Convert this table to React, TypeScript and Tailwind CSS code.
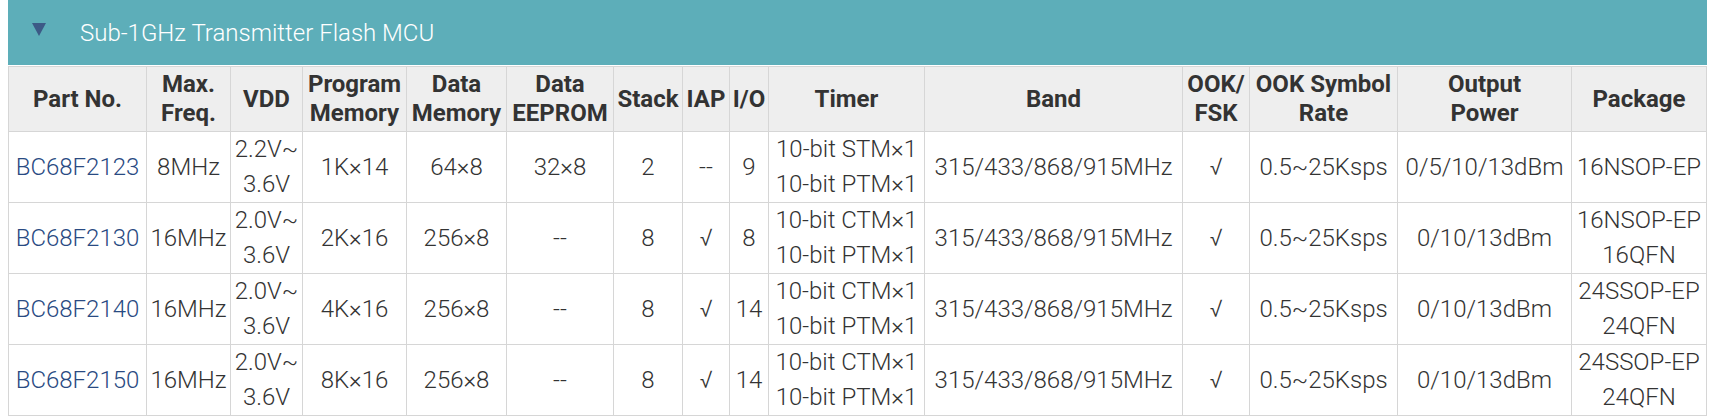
import React from "react"

type Row = {
  part: string
  freq: string
  vdd: [string, string]
  prog: string
  data: string
  eeprom: string
  stack: string
  iap: string
  io: string
  timer: [string, string]
  band: string
  ook: string
  rate: string
  power: string
  pkg: string[]
}

const rows: Row[] = [
  {
    part: "BC68F2123",
    freq: "8MHz",
    vdd: ["2.2V~", "3.6V"],
    prog: "1K×14",
    data: "64×8",
    eeprom: "32×8",
    stack: "2",
    iap: "--",
    io: "9",
    timer: ["10-bit STM×1", "10-bit PTM×1"],
    band: "315/433/868/915MHz",
    ook: "√",
    rate: "0.5~25Ksps",
    power: "0/5/10/13dBm",
    pkg: ["16NSOP-EP"],
  },
  {
    part: "BC68F2130",
    freq: "16MHz",
    vdd: ["2.0V~", "3.6V"],
    prog: "2K×16",
    data: "256×8",
    eeprom: "--",
    stack: "8",
    iap: "√",
    io: "8",
    timer: ["10-bit CTM×1", "10-bit PTM×1"],
    band: "315/433/868/915MHz",
    ook: "√",
    rate: "0.5~25Ksps",
    power: "0/10/13dBm",
    pkg: ["16NSOP-EP", "16QFN"],
  },
  {
    part: "BC68F2140",
    freq: "16MHz",
    vdd: ["2.0V~", "3.6V"],
    prog: "4K×16",
    data: "256×8",
    eeprom: "--",
    stack: "8",
    iap: "√",
    io: "14",
    timer: ["10-bit CTM×1", "10-bit PTM×1"],
    band: "315/433/868/915MHz",
    ook: "√",
    rate: "0.5~25Ksps",
    power: "0/10/13dBm",
    pkg: ["24SSOP-EP", "24QFN"],
  },
  {
    part: "BC68F2150",
    freq: "16MHz",
    vdd: ["2.0V~", "3.6V"],
    prog: "8K×16",
    data: "256×8",
    eeprom: "--",
    stack: "8",
    iap: "√",
    io: "14",
    timer: ["10-bit CTM×1", "10-bit PTM×1"],
    band: "315/433/868/915MHz",
    ook: "√",
    rate: "0.5~25Ksps",
    power: "0/10/13dBm",
    pkg: ["24SSOP-EP", "24QFN"],
  },
]

const widths = [138, 84, 72, 104, 100, 107, 69, 47, 39, 156, 258, 67, 148, 174, 135]

const heads: string[][] = [
  ["Part No."],
  ["Max.", "Freq."],
  ["VDD"],
  ["Program", "Memory"],
  ["Data", "Memory"],
  ["Data", "EEPROM"],
  ["Stack"],
  ["IAP"],
  ["I/O"],
  ["Timer"],
  ["Band"],
  ["OOK/", "FSK"],
  ["OOK Symbol", "Rate"],
  ["Output", "Power"],
  ["Package"],
]

const Lines = ({ items }: { items: string[] }) => (
  <>
    {items.map((t, i) => (
      <React.Fragment key={i}>
        {i > 0 && <br />}
        {t}
      </React.Fragment>
    ))}
  </>
)

export default function App() {
  const td = "border border-[#d6d6d6] px-[2px] py-0 text-center align-middle whitespace-nowrap"

  return (
    <div className="w-[1718px] h-[417px] bg-white overflow-hidden font-['Roboto',sans-serif]">
      <div className="ml-[8px] w-[1699px]">
        {/* collapsible header */}
        <div className="h-[65px] bg-[#5daeb9] flex items-center">
          <span className="ml-[24px] mb-[6px] w-0 h-0 border-l-[7px] border-r-[7px] border-t-[13px] border-l-transparent border-r-transparent border-t-[#3c5a86]" />
          <span className="ml-[34px] text-[24px] font-light text-white leading-none">
            Sub-1GHz Transmitter Flash MCU
          </span>
        </div>

        <table className="mt-[1px] w-[1699px] table-fixed border-collapse text-[24px] text-[#333333]">
          <colgroup>
            {widths.map((w, i) => (
              <col key={i} style={{ width: w }} />
            ))}
          </colgroup>
          <thead>
            <tr className="bg-[#eeeeee]">
              {heads.map((h, i) => (
                <th
                  key={i}
                  className="border border-[#d6d6d6] px-[2px] pt-[3px] pb-[3px] text-center align-middle font-bold leading-[29px] whitespace-nowrap"
                >
                  <Lines items={h} />
                </th>
              ))}
            </tr>
          </thead>
          <tbody className="font-light leading-[35px]">
            {rows.map((r) => (
              <tr key={r.part}>
                <td className={td}>
                  <a href="#" className="text-[#294a82]">{r.part}</a>
                </td>
                <td className={td}>{r.freq}</td>
                <td className={td}><Lines items={r.vdd} /></td>
                <td className={td}>{r.prog}</td>
                <td className={td}>{r.data}</td>
                <td className={td}>{r.eeprom}</td>
                <td className={td}>{r.stack}</td>
                <td className={td}>{r.iap}</td>
                <td className={td}>{r.io}</td>
                <td className={td}><Lines items={r.timer} /></td>
                <td className={td}>{r.band}</td>
                <td className={td}>{r.ook}</td>
                <td className={td}>{r.rate}</td>
                <td className={td}>{r.power}</td>
                <td className={td}><Lines items={r.pkg} /></td>
              </tr>
            ))}
          </tbody>
        </table>
      </div>
    </div>
  )
}
